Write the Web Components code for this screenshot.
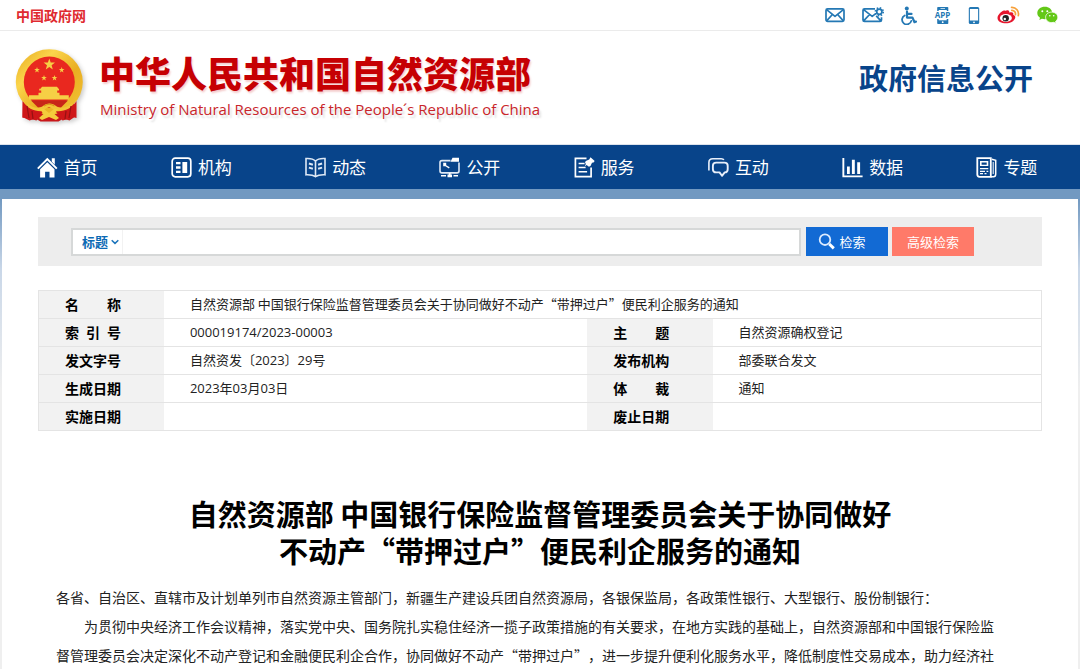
<!DOCTYPE html>
<html lang="zh-CN">
<head>
<meta charset="utf-8">
<meta name="viewport" content="width=device-width, initial-scale=1">
<title>中华人民共和国自然资源部 - 政府信息公开</title>
<style>
  html { background: #fff; }
  body {
    margin: 0;
    font-family: "Noto Sans CJK SC", "Open Sans", sans-serif;
    font-size: 14px;
    color: #222;
    text-spacing-trim: space-all;
    --navy: #08448a;
    --line: #e4e4e4;
  }
</style>
</head>
<body>
<top-bar></top-bar>
<site-masthead>
  <span slot="name">中华人民共和国自然资源部</span>
  <span slot="english">Ministry of Natural Resources of the People´s Republic of China</span>
  <span slot="section">政府信息公开</span>
</site-masthead>
<site-nav>
  <nav-item icon="home">首页</nav-item>
  <nav-item icon="org">机构</nav-item>
  <nav-item icon="book">动态</nav-item>
  <nav-item icon="screen">公开</nav-item>
  <nav-item icon="note">服务</nav-item>
  <nav-item icon="chat">互动</nav-item>
  <nav-item icon="chart">数据</nav-item>
  <nav-item icon="news">专题</nav-item>
</site-nav>
<page-panel>
  <search-bar></search-bar>
  <doc-meta></doc-meta>
  <doc-article>
    <h1 slot="title">自然资源部 中国银行保险监督管理委员会关于协同做好<br>不动产“带押过户”便民利企服务的通知</h1>
    <p>各省、自治区、直辖市及计划单列市自然资源主管部门，新疆生产建设兵团自然资源局，各银保监局，各政策性银行、大型银行、股份制银行：</p>
    <p>　　为贯彻中央经济工作会议精神，落实党中央、国务院扎实稳住经济一揽子政策措施的有关要求，在地方实践的基础上，自然资源部和中国银行保险监督管理委员会决定深化不动产登记和金融便民利企合作，协同做好不动产“带押过户”，进一步提升便利化服务水平，降低制度性交易成本，助力经济社</p>
  </doc-article>
</page-panel>

<script>
const ICONS = {
  mail: [20, 20, `<g fill="none" stroke="#2478b4" stroke-width="1.7" stroke-linejoin="round"><rect x="1" y="3.8" width="18" height="12.6" rx="1.6"/><path d="M1.6 4.6 10 11.4l8.400-6.800M1.600 15.800l5.800-6.300M18.400 15.800l-5.800-6.300"/></g>`],
  mailgear: [22, 20, `<g fill="none" stroke="#2478b4" stroke-width="1.7" stroke-linejoin="round"><path d="M13 3.800H2.500Q1 3.800 1 5.300v9.600q0 1.500 1.500 1.500h15.500q1.500 0 1.500-1.500v-2.600M1.600 4.600l8.600 6.800 3.500-2.700M1.600 15.800l6-6.300M18.700 15.700l-4.500-4.800"/><circle cx="17.300" cy="6.800" r="2.600"/><circle cx="17.300" cy="6.800" r="3.900" stroke-dasharray="1.500 1.560"/></g>`],
  access: [16, 20, `<g fill="none" stroke="#2478b4" stroke-width="2.2" stroke-linecap="round" stroke-linejoin="round"><path d="M6 6.600v6h5.500l2 4.600 1.500-.6M6 8.900h4.500"/><path d="M3.700 10.500a4.700 4.700 0 1 0 6.600 5.400" stroke-width="1.800"/></g><circle cx="5.800" cy="3.500" r="2" fill="#2478b4"/>`],
  app: [17, 20, `<path d="M4 2h9.500q.8 0 .8.800V6h-1.500V5H4.700v1H3.200V2.800Q3.200 2 4 2zM3.200 14h11.100v4.200q0 .8-.8.800H4q-.8 0-.8-.8z" fill="#2478b4"/><path d="M4.700 13.500h8v1.800h-8z" fill="#fff"/><path d="M6.500 3.500h4.500" stroke="#fff" stroke-width=".7"/><circle cx="8.700" cy="17.200" r=".9" fill="#fff"/><text x="8.500" y="12.600" text-anchor="middle" font-family="Open Sans,sans-serif" font-weight="700" font-size="8" fill="#2478b4">APP</text>`],
  phone: [12, 20, `<rect x=".8" y="2" width="10.400" height="17" rx="1.500" fill="#2478b4"/><rect x="1.900" y="4" width="8.200" height="11.500" fill="#fff"/><circle cx="6" cy="17.300" r=".9" fill="#fff"/>`],
  weibo: [23, 20, `<path d="M9 5.700c2-.8 3.600-.2 3.200 1.900 3-.9 4.800 0 4 2.200 2 .7 2.500 2 1.900 3.500-1 3-4.900 5-9.100 5-4.700 0-8.500-2.100-8.500-5.400C.5 10 4.600 6 7 5.500c1.200-.2 1.700.2 2 .2z" fill="#e6162d"/><ellipse cx="8.900" cy="13" rx="6" ry="3.900" fill="#fff"/><circle cx="8.700" cy="13.200" r="3.200" fill="#222"/><circle cx="7.800" cy="14" r="1.200" fill="#fff"/><path d="M14.600 2.400a6.600 6.600 0 0 1 6.700 8.200M14.800 5.400a3.500 3.500 0 0 1 3.600 4.300" fill="none" stroke="#f7a03a" stroke-width="1.700" stroke-linecap="round"/>`],
  wechat: [21, 20, `<path d="M7.800 1.800C3.600 1.800.3 4.500.3 8c0 2 1 3.600 2.700 4.800l-.7 2.300 2.600-1.300c1 .3 1.900.4 2.900.4 4.100 0 7.400-2.700 7.400-6.200S12 1.800 7.800 1.800z" fill="#63c817"/><path d="M14.700 7.100c-3.500 0-6.100 2.300-6.100 5.200s2.600 5.300 6.100 5.300c.8 0 1.500-.1 2.200-.3l2.200 1.200-.6-2c1.400-1 2.300-2.500 2.300-4.200 0-2.900-2.600-5.200-6.100-5.200z" fill="#63c817" stroke="#fff" stroke-width=".8"/><g fill="#fff"><circle cx="5.300" cy="6.300" r="1"/><circle cx="10.300" cy="6.300" r="1"/><circle cx="12.800" cy="10.700" r=".8"/><circle cx="16.700" cy="10.700" r=".8"/></g>`],
  home: [21, 21, `<path d="M10.300.8 20.500 11l-1.400 1.300-8.800-8.700-8.800 8.700L.1 11z" fill="#fff"/><path d="M14.800 1.200h3v6.500l-3-3zM10.300 5.200l7.200 7v8.400h-5v-5.900H8.100v5.900h-5v-8.400z" fill="#fff"/>`],
  org: [21, 21, `<rect x="1.200" y="1.200" width="18.600" height="18.600" rx="3" fill="none" stroke="#fff" stroke-width="1.700"/><path d="M5 4.900h4.500v2.400H5zM5 9.300h4.500v2.400H5zM5 13.700h4.500v2.400H5zM11.400 4.900h4.800v11.200h-4.800z" fill="#fff"/>`],
  book: [21, 21, `<g fill="none" stroke="#dfe9f5" stroke-width="1.600"><path d="M10.500 4.100C8.500 1.900 5.500 1.200 1 1.500v16.300c4.200-.2 7.200.2 9.500 1.900 2.300-1.700 5.300-2.100 9.500-1.900V1.500c-4.500-.3-7.500.4-9.500 2.600zM10.500 4v15.300"/><path d="M3.900 6.500l4 1.200M3.900 10.600l4 1.200M17.100 6.500l-4 1.200M17.100 10.600l-4 1.200" stroke-width="2"/></g>`],
  screen: [21, 21, `<path d="M11.500 3.600H3Q1 3.600 1 5.400v8.700q0 1.800 2 1.800h15q2 0 2-1.800V5.500" fill="none" stroke="#dfe9f5" stroke-width="1.600"/><path d="M13.500.8H20v3.900h-8.500zM4.200 5.800h3v2.500l3.500 2-.8 1.100-3.500-2.100H4.200zM9.800 15.900h1.800v1.500H13v2.800H8.500v-2.800h1.300zM2 18h5v1.600H2zM14.500 18H19v1.600h-4.500z" fill="#fff"/>`],
  note: [21, 21, `<path d="M12.500 1.300H1.400v18.400h15.700V10.500" fill="none" stroke="#fff" stroke-width="1.700"/><path d="M4.600 5.700h6v1.600h-6zM4.600 9.700h7v1.600h-7zM4.600 14h8.500v1.600H4.600z" fill="#fff"/><path d="M16.500.2l4.200 3.900-1.200 1.500-1.500.2-1.500 3.300-1.600.6-2.300-1.600-2 1.400 1.300-2.500-.9-1.500.8-1.600 3.400-1.500z" fill="#fff"/>`],
  chat: [21, 21, `<g fill="none" stroke="#e8effa" stroke-linejoin="round"><path d="M.9 13.500V5.600Q.9 1.800 4.700 1.800h8.500q2.200 0 2.600 1.100" stroke-width="1.600"/><path d="M8.200 5.600h8.200q3.300 0 3.300 3.200v3.400q0 3.200-3 3.200L14 18.800l-2.500-3.400H8.200q-3.300 0-3.300-3.200V8.800q0-3.200 3.300-3.200z" stroke-width="1.900"/></g>`],
  chart: [21, 21, `<path d="M.4 1h1.900v17.500h18.300v1.800H.4zM5 9.500h2.800v7.500H5zM9.900 2.800h2.900V17H9.900zM15.200 5.300h2.900V17h-2.900z" fill="#fff"/>`],
  news: [21, 21, `<path d="M1.300 1.200h13.500v18.600H3.500q-2.200 0-2.200-2.200z" fill="none" stroke="#fff" stroke-width="1.800"/><path d="M4 4h8.300v1.500H4zM4 5h1.600v4H4zM10.700 5h1.600v4h-1.600zM4 7.800h8.300v1.300H4zM4 11h8.300v1.300H4zM4 13.700h5V15H4zM10.500 13.700h1.800V15h-1.800zM4 16h3v1.300H4zM8.500 16h2v1.300h-2z" fill="#fff"/><path d="M15.800 2.200l3.900 1.200v13.800q0 2.400-2.300 2.600h-2.600" fill="none" stroke="#fff" stroke-width="1.500"/><path d="M17.200 5v12" stroke="#fff"/>`],
  search: [17, 17, `<circle cx="7" cy="6.700" r="5.300" fill="none" stroke="#dcebff" stroke-width="1.800"/><path d="M11.300 11l4.500 4.300" stroke="#fff" stroke-width="3"/>`],
  caret: [8, 6, `<path d="M.7 1.200 4 4.400l3.300-3.200" fill="none" stroke="#1b74bb" stroke-width="1.500"/>`]
};

const STAR = 'M0-6 1.400-1.900 5.700-1.900 2.300.7 3.500 4.900 0 2.400-3.500 4.900-2.300.7-5.700-1.900-1.400-1.900Z';

function define(name, css, html, init) {
  const template = document.createElement('template');
  template.innerHTML = `<style>${css}</style>${html}`;
  customElements.define(name, class extends HTMLElement {
    constructor() {
      super();
      this.attachShadow({ mode: 'open' }).append(template.content.cloneNode(true));
    }
    connectedCallback() { if (init) init(this, this.shadowRoot); }
  });
}

define('ui-icon', `:host{display:inline-flex;flex:none}svg{display:block}`, `<span></span>`, (el, root) => {
  const [w, h, art] = ICONS[el.getAttribute('name')];
  root.querySelector('span').innerHTML = `<svg width="${w}" height="${h}" viewBox="0 0 ${w} ${h}" aria-hidden="true">${art}</svg>`;
});

define('top-bar', `
  :host{display:flex;justify-content:space-between;align-items:center;height:30px;padding:0 22px 0 16px;border-bottom:1px solid #ebebeb}
  a{color:#e02a30;text-decoration:none;font-weight:700}
  .tools{display:flex;gap:17px}
  .tools a{display:flex}
`, `
  <a href="#gov">中国政府网</a>
  <div class="tools">
    <a href="#mail" aria-label="邮箱"><ui-icon name="mail"></ui-icon></a>
    <a href="#letter" aria-label="信箱设置"><ui-icon name="mailgear"></ui-icon></a>
    <a href="#access" aria-label="无障碍"><ui-icon name="access"></ui-icon></a>
    <a href="#app" aria-label="客户端"><ui-icon name="app"></ui-icon></a>
    <a href="#phone" aria-label="手机版"><ui-icon name="phone"></ui-icon></a>
    <a href="#weibo" aria-label="微博"><ui-icon name="weibo"></ui-icon></a>
    <a href="#wechat" aria-label="微信"><ui-icon name="wechat"></ui-icon></a>
  </div>`);

define('national-emblem', `:host{display:block;flex:none}svg{display:block;filter:drop-shadow(2px 2px 2px #0003)}`, `
  <svg width="80" height="90" viewBox="0 0 80 90" role="img" aria-label="国徽">
    <defs><linearGradient id="g" x1="0" y1="0" x2="1" y2="1"><stop offset="0" stop-color="#e6a91d"/><stop offset=".3" stop-color="#fbd54c"/><stop offset=".6" stop-color="#e9ae22"/><stop offset="1" stop-color="#f3c535"/></linearGradient></defs>
    <path d="M13 59l-.5 18 7 3.500 6-2 5 3h18l5-3 6 2 5-3.500-.5-18z" fill="#c9171a"/>
    <ellipse cx="39.300" cy="42" rx="33.500" ry="32.700" fill="url(#g)"/>
    <circle cx="39.300" cy="42" r="25.500" fill="#e9281f"/>
    <g fill="#f6cf45">
      <path d="${STAR}" transform="translate(39.300 24.500)"/>
      <path d="${STAR}" transform="translate(27 30) scale(.5)"/>
      <path d="${STAR}" transform="translate(51.700 30) scale(.5)"/>
      <path d="${STAR}" transform="translate(34 38) scale(.5)"/>
      <path d="${STAR}" transform="translate(44.500 38) scale(.5)"/>
      <path d="M32 46.800h15l1.500 2H49v1.700h-1.800v2.300h2.300v2.400h9.300v4.300H19v-4.300h9.500v-2.400h2.700v-2.300h-2v-1.700h1.300z"/>
    </g>
    <path d="M21 60.500h37l-7 7H28z" fill="#c82518"/>
    <path d="M17 63c6 5.500 12 6 16 3 3-3.500 10-3.500 13 0 4 3 10 2.500 16-3l-2 7c-6 3.500-11 3.500-15 0l-6-3-6 3c-4 3.500-9 3.500-15 0z" fill="#f2c438"/>
    <path d="M12.500 61c5 8 13 11 21 10l-7 9.500-6-1.500-4-2-4 1zM66.500 61c-5 8-13 11-21 10l7 9.500 6-1.500 4-2 4 1z" fill="#cf1719"/>
    <path d="M17 66l2 12M22 71l1 8M61 66l-2 12M56 71l-1 8" stroke="#971112" stroke-width="1.200"/>
    <path d="M30 69h4l5 4 5-4h4l-3.500 5 4.500 4-3 2-7-3-7 3-3-2 4.500-4z" fill="#f4cc3c"/>
    <path d="M34 66q5-3.500 10.500 0" stroke="#d79a18" stroke-width="1.200" fill="none"/>
  </svg>`);

define('site-masthead', `
  :host{display:flex;align-items:flex-start;height:104px;padding:9px 47px 0 10px;border-bottom:1px solid #dde3ec}
  .names{flex:1;padding:7px 0 0 9px}
  .name{color:#c60003;font-size:36px;line-height:50px;font-weight:900;text-shadow:1px 2px 2px #c6000333;white-space:nowrap}
  .english{color:#c9252a;font-family:"Open Sans",sans-serif;font-size:15px;line-height:24px;padding-left:1px;text-shadow:2px 3px 2px #0002;white-space:nowrap}
  .section{color:var(--navy);font-size:29px;line-height:40px;font-weight:700;padding-top:17px;white-space:nowrap}
`, `
  <national-emblem></national-emblem>
  <div class="names">
    <div class="name"><slot name="name"></slot></div>
    <div class="english"><slot name="english"></slot></div>
  </div>
  <div class="section"><slot name="section"></slot></div>`);

define('site-nav', `
  :host{display:block;background:var(--navy)}
  nav{display:grid;grid-template-columns:repeat(8,1fr);height:44px;padding-right:6px}
`, `<nav aria-label="主导航"><slot></slot></nav>`);

define('nav-item', `
  :host{display:flex}
  a{flex:1;display:flex;align-items:center;justify-content:center;gap:6px;color:#fff;font-size:17px;line-height:24px;text-decoration:none}
`, `<a href="#section"><span><slot></slot></span></a>`, (el, root) => {
  const icon = document.createElement('ui-icon');
  icon.setAttribute('name', el.getAttribute('icon'));
  root.querySelector('a').prepend(icon);
});

define('page-panel', `
  :host{display:block;padding:10px 2px 0;background:linear-gradient(#7299c1 0,#7299c1 10px,#c9d7e8 80px,#efefef 200px)}
  main{background:#fff;padding:18px 36px 0}
`, `<main><slot></slot></main>`);

define('search-bar', `
  :host{display:block}
  form{display:flex;align-items:center;gap:4px;background:#ededed;height:49px;padding:0 68px 0 33px}
  .field{flex:1;display:flex;align-items:center;height:24px;border:2px solid #d6d8d8;background:#fff;margin-right:1px}
  .pick{position:relative;display:flex;align-items:center;padding-left:9px;border-right:1px solid #f2f2f2}
  .pick ui-icon{position:absolute;right:3px;pointer-events:none}
  select{appearance:none;border:0;background:none;padding:0;width:40px;color:#0c69b4;font:700 13px/24px "Noto Sans CJK SC",sans-serif}
  input{flex:1;min-width:0;height:24px;border:0;padding:0 8px;background:none;font:13px "Noto Sans CJK SC",sans-serif;outline:0}
  button{display:flex;align-items:center;justify-content:center;gap:4px;width:82px;height:29px;border:0;padding:0;color:#fff;font:13px/20px "Noto Sans CJK SC",sans-serif}
  .go{background:#126ad4;padding-right:10px}
  .more{background:#ff7a69}
`, `
  <form role="search">
    <div class="field">
      <div class="pick"><select aria-label="检索范围"><option>标题</option><option>正文</option></select><ui-icon name="caret"></ui-icon></div>
      <input type="text" aria-label="检索内容">
    </div>
    <button class="go" type="button"><ui-icon name="search"></ui-icon>检索</button>
    <button class="more" type="button">高级检索</button>
  </form>`);

define('doc-meta', `
  :host{display:block;padding-top:24px}
  table{width:100%;table-layout:fixed;border-collapse:collapse;border:1px solid var(--line)}
  th,td{height:25px;padding:0 0 2px 26px;border-top:1px solid var(--line);border-bottom:1px solid var(--line);text-align:left;line-height:20px;white-space:nowrap}
  th{background:#f2f2f2;color:#000;font-size:14px;font-weight:700}
  td{font-size:13px;font-weight:400}
  .num{font-family:"Open Sans","Noto Sans CJK SC",sans-serif}
  .label{width:12.5%}
  .wide{width:42.2%}
`, `
  <table>
    <colgroup><col class="label"><col class="wide"><col class="label"><col></colgroup>
    <tbody>
      <tr><th scope="row">名　　称</th><td colspan="3">自然资源部 中国银行保险监督管理委员会关于协同做好不动产“带押过户”便民利企服务的通知</td></tr>
      <tr><th scope="row">索&ensp;引&ensp;号</th><td class="num">000019174/2023-00003</td><th scope="row">主　　题</th><td>自然资源确权登记</td></tr>
      <tr><th scope="row">发文字号</th><td class="num">自然资发〔2023〕29号</td><th scope="row">发布机构</th><td>部委联合发文</td></tr>
      <tr><th scope="row">生成日期</th><td class="num">2023年03月03日</td><th scope="row">体　　裁</th><td>通知</td></tr>
      <tr><th scope="row">实施日期</th><td></td><th scope="row">废止日期</th><td></td></tr>
    </tbody>
  </table>`);

define('doc-article', `
  :host{display:block;padding-top:64px}
  ::slotted(h1){margin:0 0 14px;color:#000;font-size:29px;line-height:37px;font-weight:700;text-align:center}
  .text{padding:0 40px 0 18px}
  ::slotted(p){margin:0;line-height:29px}
`, `<article><slot name="title"></slot><div class="text"><slot></slot></div></article>`);
</script>
</body>
</html>
